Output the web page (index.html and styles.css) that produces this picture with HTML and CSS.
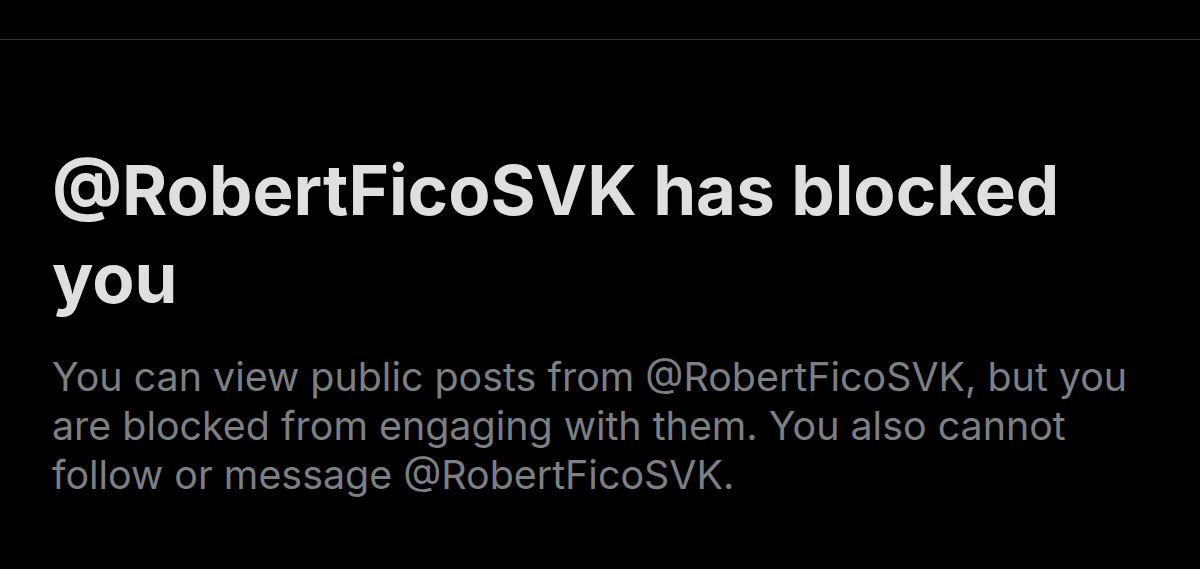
FILE: index.html
```html
<!DOCTYPE html>
<html lang="en">
<head>
<meta charset="utf-8">
<title>Blocked</title>
<link rel="stylesheet" href="styles.css">
</head>
<body>
<div class="topbar"></div>
<main class="content">
  <h1 class="title">@RobertFicoSVK has blocked you</h1>
  <p class="desc">You can view public posts from @RobertFicoSVK, but you are blocked from engaging with them. You also cannot follow or message @RobertFicoSVK.</p>
</main>
</body>
</html>
```

FILE: styles.css
```css
html, body {
  margin: 0;
  padding: 0;
  background: #000;
  height: 100%;
  overflow: hidden;
}
body {
  font-family: Inter, "Noto Sans", sans-serif;
}
.topbar {
  height: 39px;
  border-bottom: 1px solid #2f3336;
}
.content {
  padding: 106px 52px 0 52px;
}
.title {
  margin: 0;
  width: 1060px;
  font-size: 69px;
  line-height: 88px;
  font-weight: 700;
  color: #dedfe0;
  letter-spacing: 0;
}
.desc {
  margin: 31px 0 0 0;
  width: 1100px;
  font-size: 39.4px;
  line-height: 49px;
  font-weight: 400;
  color: #7c7f83;
}
```
